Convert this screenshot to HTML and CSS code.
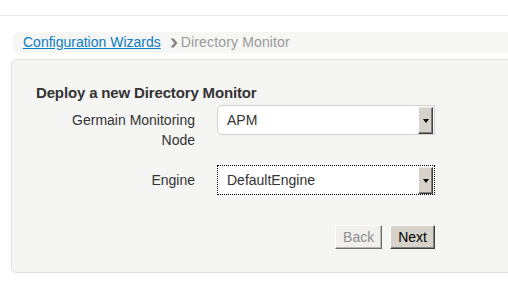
FILE: index.html
```html
<!DOCTYPE html>
<html>
<head>
<meta charset="utf-8">
<link rel="stylesheet" href="styles.css">
</head>
<body>
<div class="topbar"></div>
<div class="page">
  <nav class="crumbs">
    <a class="crumb-link" href="#">Configuration Wizards</a>
    <svg class="chev" width="8" height="10" viewBox="0 0 8 10"><path d="M0.5 0.5 L3.8 0.5 L7.5 5 L3.8 9.5 L0.5 9.5 L4.2 5 Z" fill="#858585"/></svg>
    <span class="crumb-current">Directory Monitor</span>
  </nav>
  <section class="panel">
    <h2 class="title">Deploy a new Directory Monitor</h2>
    <div class="form">
      <div class="label">Germain Monitoring<br>Node</div>
      <div class="select rounded">
        <span class="value">APM</span>
        <span class="arrow"><span class="tri"></span></span>
      </div>
      <div class="label">Engine</div>
      <div class="select focused">
        <span class="value">DefaultEngine</span>
        <span class="arrow"><span class="tri"></span></span>
      </div>
    </div>
    <div class="actions">
      <button class="btn disabled" disabled>Back</button>
      <button class="btn">Next</button>
    </div>
  </section>
</div>
</body>
</html>
```
FILE: styles.css
```css
html, body {
  margin: 0;
  padding: 0;
  background: #ffffff;
  overflow: hidden;
  font-family: "Liberation Sans", Arial, sans-serif;
}
.topbar {
  height: 15px;
  border-bottom: 1px solid #e8e8e8;
}
.page {
  padding-top: 16px;
}
.crumbs {
  margin-left: 13px;
  margin-right: -20px;
  height: 21px;
  background: #f6f6f5;
  border-radius: 5px 0 0 5px;
  padding-left: 10px;
  display: flex;
  align-items: center;
  font-size: 14px;
  line-height: 21px;
}
.crumb-link {
  color: #0a7cc5;
  text-decoration: underline;
}
.chev {
  margin-left: 9px;
  margin-right: 3px;
}
.crumb-current {
  color: #9a9a9a;
  letter-spacing: 0.15px;
}
.panel {
  margin-top: 6px;
  margin-left: 11px;
  margin-right: -20px;
  background: #f5f5f4;
  border: 1px solid #e6dfdf;
  border-radius: 5px;
  padding: 25px 0 0 24px;
  box-sizing: border-box;
  height: 214px;
}
.title {
  margin: 0;
  font-size: 15px;
  letter-spacing: -0.15px;
  line-height: 16px;
  font-weight: bold;
  color: #333333;
}
.form {
  margin-top: 4px;
  display: grid;
  grid-template-columns: 159px 218px;
  column-gap: 22px;
  row-gap: 15px;
  align-items: start;
}
.label {
  text-align: right;
  font-size: 14px;
  line-height: 20px;
  padding-top: 5px;
  color: #333333;
}
.select {
  height: 30px;
  box-sizing: border-box;
  background: #ffffff;
  display: flex;
  align-items: center;
  font-size: 14px;
  color: #333333;
}
.select.rounded {
  border: 1px solid #cfcfcf;
  border-radius: 5px 0 0 5px;
}
.select.focused {
  border: 1px dotted #000000;
}
.value {
  flex: 1;
  padding-left: 9px;
}
.arrow {
  width: 15px;
  height: 27px;
  margin-right: 1px;
  box-sizing: border-box;
  background: #d6d2ca;
  border-top: 1px solid #e8e6e2;
  border-left: 1px solid #ffffff;
  border-right: 1px solid #404040;
  border-bottom: 1px solid #404040;
  box-shadow: inset -1px -1px 0 #808080;
  display: flex;
  align-items: center;
  justify-content: center;
}
.tri {
  width: 0;
  height: 0;
  border-left: 3.5px solid transparent;
  border-right: 3.5px solid transparent;
  border-top: 4px solid #000000;
  margin-top: 1px;
}
.actions {
  margin-top: 30px;
  width: 399px;
  display: flex;
  justify-content: flex-end;
  gap: 8px;
}
.btn {
  height: 24px;
  padding: 0 7px;
  font-family: "Liberation Sans", Arial, sans-serif;
  font-size: 14px;
  color: #000000;
  background: #d8d3ca;
  border-top: 1px solid #ffffff;
  border-left: 1px solid #ffffff;
  border-right: 1px solid #404040;
  border-bottom: 1px solid #404040;
  box-shadow: inset -1px -1px 0 #808080;
  border-radius: 0;
}
.btn.disabled {
  background: #f1f0ec;
  color: #8e8e8e;
  border-right-color: #6f6f66;
  border-bottom-color: #6f6f66;
  box-shadow: inset -1px -1px 0 #b8b6ae;
}
```
